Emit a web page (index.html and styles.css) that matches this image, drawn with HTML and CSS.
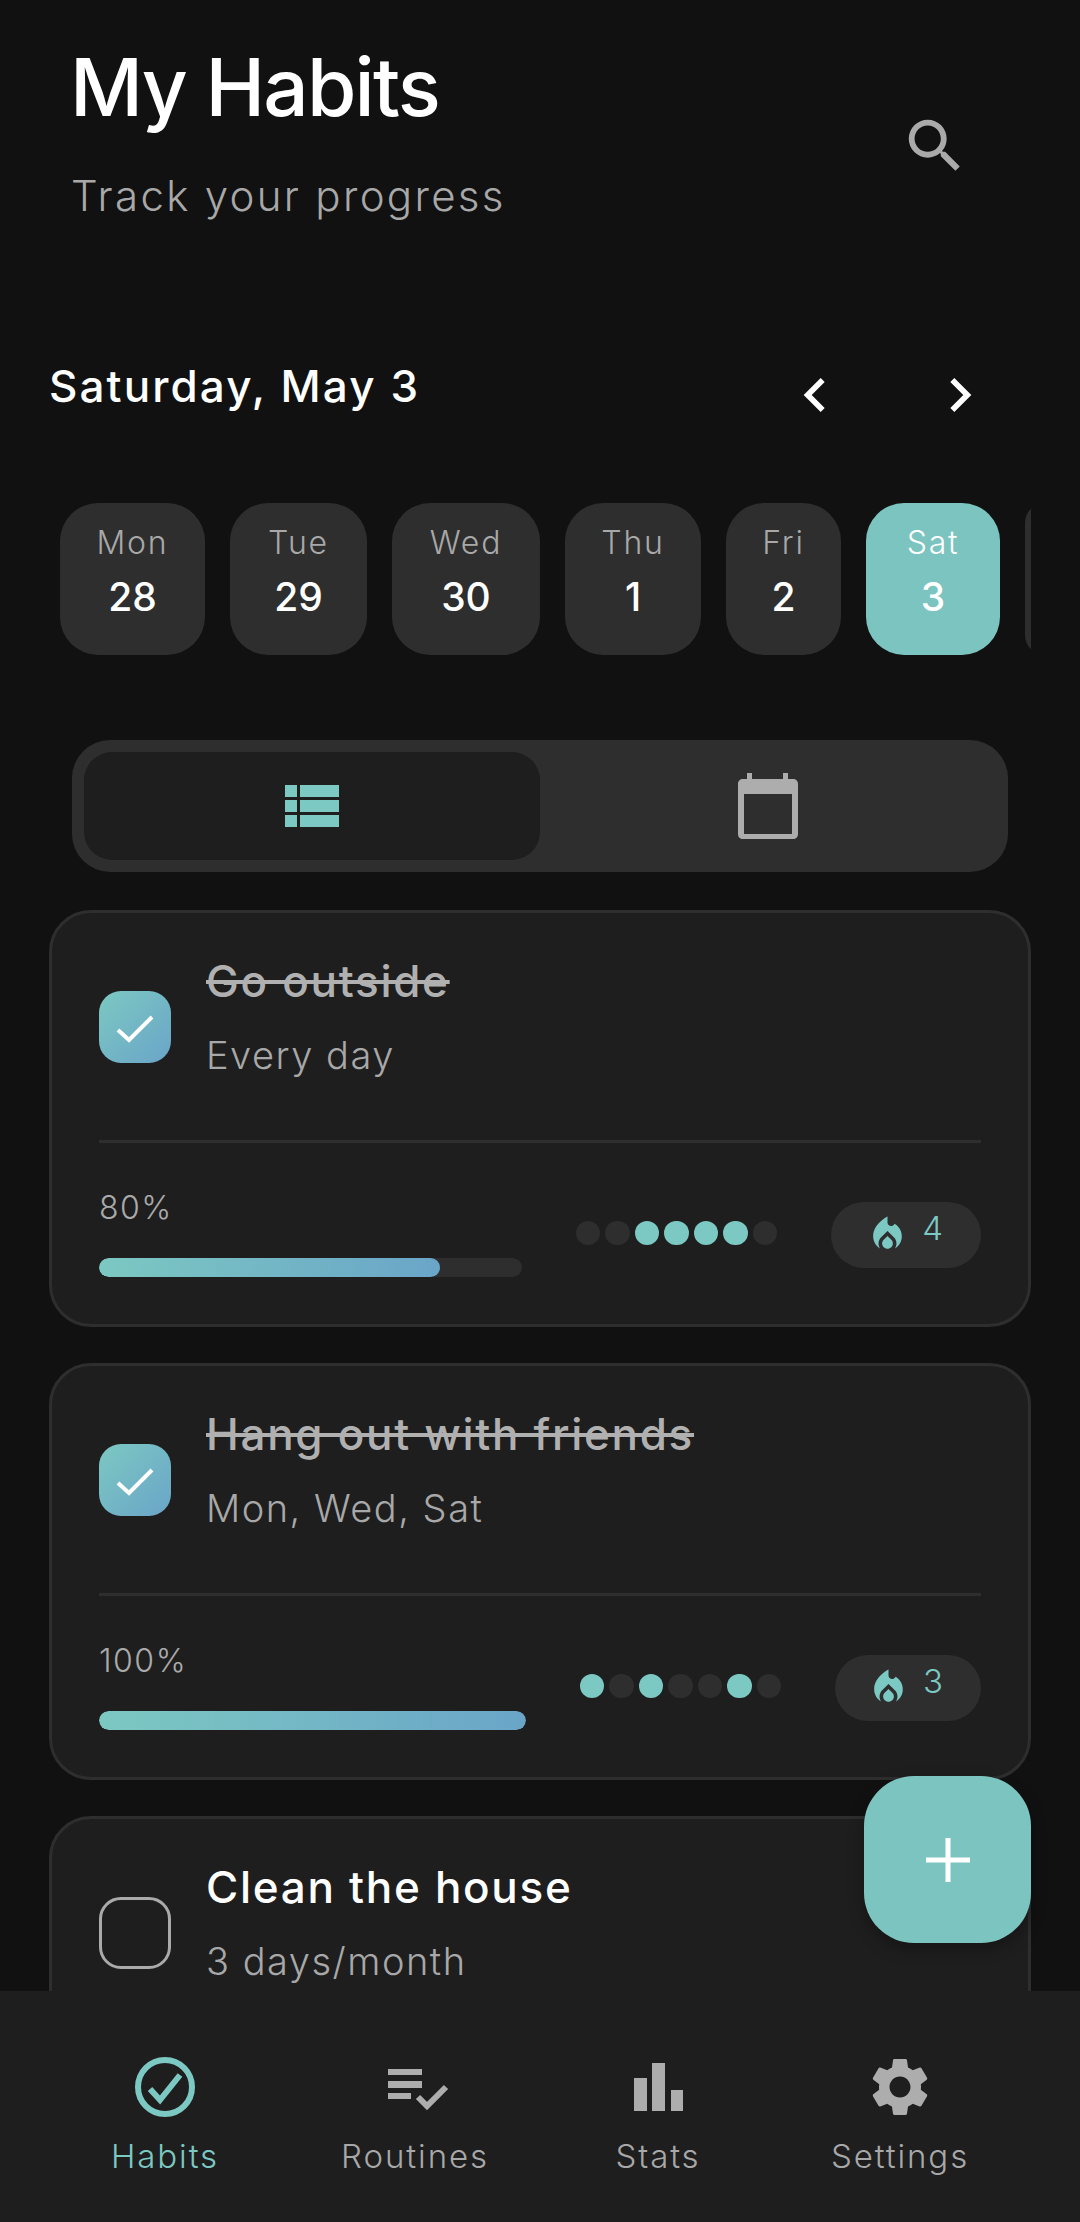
FILE: index.html
```html
<!DOCTYPE html>
<html>
<head>
    <link rel="stylesheet" href="styles.css">
</head>
<body>
    <div class="screen">
        <div class="content">
            <div class="header">
                <div>
                    <h1 class="title">My Habits</h1>
                    <p class="subtitle">Track your progress</p>
                </div>
                <svg class="search" viewBox="0 0 24 24"><path d="M15.5 14h-.79l-.28-.27A6.47 6.47 0 0 0 16 9.5 6.5 6.5 0 1 0 9.5 16c1.61 0 3.09-.59 4.23-1.57l.27.28v.79l5 4.99L20.49 19l-4.99-5zm-6 0C7.01 14 5 11.99 5 9.5S7.01 5 9.5 5 14 7.01 14 9.5 11.99 14 9.5 14z"/></svg>
            </div>

            <div class="date-row">
                <div class="date">Saturday, May 3</div>
                <div class="date-nav">
                    <svg viewBox="0 0 24 24"><path d="M15.41 7.41L14 6l-6 6 6 6 1.41-1.41L10.83 12z"/></svg>
                    <svg viewBox="0 0 24 24"><path d="M10 6L8.59 7.41 13.17 12l-4.58 4.59L10 18l6-6z"/></svg>
                </div>
            </div>

            <div class="days">
                <div class="day"><span class="day-name">Mon</span><span class="day-num">28</span></div>
                <div class="day"><span class="day-name">Tue</span><span class="day-num">29</span></div>
                <div class="day"><span class="day-name">Wed</span><span class="day-num">30</span></div>
                <div class="day"><span class="day-name">Thu</span><span class="day-num">1</span></div>
                <div class="day"><span class="day-name">Fri</span><span class="day-num">2</span></div>
                <div class="day active"><span class="day-name">Sat</span><span class="day-num">3</span></div>
                <div class="day"></div>
            </div>

            <div class="toggle">
                <div class="toggle-item selected">
                    <svg class="icon-list" viewBox="0 0 54 42">
                        <rect x="0" y="0" width="12" height="12"/><rect x="15" y="0" width="39" height="12"/>
                        <rect x="0" y="15" width="12" height="12"/><rect x="15" y="15" width="39" height="12"/>
                        <rect x="0" y="30" width="12" height="12"/><rect x="15" y="30" width="39" height="12"/>
                    </svg>
                </div>
                <div class="toggle-item">
                    <svg class="icon-cal" viewBox="0 0 60 66"><path fill-rule="evenodd" d="M9 0h5v6h31V0h5v6h5c3 0 5 2 5 5v50c0 3-2 5-5 5H5c-3 0-5-2-5-5V11c0-3 2-5 5-5h4zM6 21v40h48V21z"/></svg>
                </div>
            </div>

            <div class="card">
                <div class="card-top">
                    <div class="check done">
                        <svg viewBox="0 0 72 72"><path d="M19 39l11 10 23-23"/></svg>
                    </div>
                    <div>
                        <div class="habit-name struck">Go outside</div>
                        <div class="habit-freq">Every day</div>
                    </div>
                </div>
                <div class="card-bottom">
                    <div class="progress">
                        <div class="percent">80%</div>
                        <div class="bar"><div class="bar-fill" style="width: 80.6%"></div></div>
                    </div>
                    <div class="dots">
                        <i></i><i></i><i class="on"></i><i class="on"></i><i class="on"></i><i class="on"></i><i></i>
                    </div>
                    <div class="streak">
                        <svg viewBox="0 0 24 24"><path d="M12 12.9l-2.13 2.09C9.31 15.55 9 16.28 9 17.06 9 18.68 10.35 20 12 20s3-1.32 3-2.94c0-.78-.31-1.52-.87-2.07L12 12.9z"/><path d="M16 6l-.44.55C14.38 8.02 12 7.19 12 5.3V2S4 6 4 13c0 2.92 1.56 5.47 3.89 6.86-.56-.79-.89-1.76-.89-2.8 0-1.32.52-2.56 1.47-3.5L12 10.1l3.53 3.47c.95.93 1.47 2.17 1.47 3.5 0 1.02-.31 1.96-.85 2.75 1.89-1.15 3.29-3.06 3.71-5.3.66-3.55-1.07-6.9-3.86-8.52z"/></svg>
                        <span>4</span>
                    </div>
                </div>
            </div>

            <div class="card">
                <div class="card-top">
                    <div class="check done">
                        <svg viewBox="0 0 72 72"><path d="M19 39l11 10 23-23"/></svg>
                    </div>
                    <div>
                        <div class="habit-name struck">Hang out with friends</div>
                        <div class="habit-freq">Mon, Wed, Sat</div>
                    </div>
                </div>
                <div class="card-bottom">
                    <div class="progress">
                        <div class="percent">100%</div>
                        <div class="bar"><div class="bar-fill" style="width: 100%"></div></div>
                    </div>
                    <div class="dots">
                        <i class="on"></i><i></i><i class="on"></i><i></i><i></i><i class="on"></i><i></i>
                    </div>
                    <div class="streak short">
                        <svg viewBox="0 0 24 24"><path d="M12 12.9l-2.13 2.09C9.31 15.55 9 16.28 9 17.06 9 18.68 10.35 20 12 20s3-1.32 3-2.94c0-.78-.31-1.52-.87-2.07L12 12.9z"/><path d="M16 6l-.44.55C14.38 8.02 12 7.19 12 5.3V2S4 6 4 13c0 2.92 1.56 5.47 3.89 6.86-.56-.79-.89-1.76-.89-2.8 0-1.32.52-2.56 1.47-3.5L12 10.1l3.53 3.47c.95.93 1.47 2.17 1.47 3.5 0 1.02-.31 1.96-.85 2.75 1.89-1.15 3.29-3.06 3.71-5.3.66-3.55-1.07-6.9-3.86-8.52z"/></svg>
                        <span>3</span>
                    </div>
                </div>
            </div>

            <div class="card">
                <div class="card-top">
                    <div class="check"></div>
                    <div>
                        <div class="habit-name">Clean the house</div>
                        <div class="habit-freq">3 days/month</div>
                    </div>
                </div>
            </div>
        </div>

        <div class="fab">
            <svg viewBox="0 0 44 44"><path d="M22 0v44M0 22h44"/></svg>
        </div>

        <div class="nav">
            <div class="nav-item current">
                <svg class="stroke" viewBox="0 0 70 70"><circle cx="35" cy="35" r="27"/><path d="M20 37l10 11 20-25"/></svg>
                <span>Habits</span>
            </div>
            <div class="nav-item">
                <svg viewBox="0 0 70 70"><path d="M8 17h34v6H8zM8 29h34v7H8zM8 41h23v6H8z"/><path class="tick" d="M38 45l9 9 19-19"/></svg>
                <span>Routines</span>
            </div>
            <div class="nav-item">
                <svg viewBox="0 0 70 70"><path d="M11 26h13v33H11zM29 11h13v48H29zM48 38h12v21H48z"/></svg>
                <span>Stats</span>
            </div>
            <div class="nav-item">
                <svg viewBox="0 0 24 24"><path d="M19.14 12.94c.04-.3.06-.61.06-.94 0-.32-.02-.64-.07-.94l2.03-1.58a.49.49 0 0 0 .12-.61l-1.92-3.32a.488.488 0 0 0-.59-.22l-2.39.96c-.5-.38-1.03-.7-1.62-.94l-.36-2.54a.484.484 0 0 0-.48-.41h-3.84c-.24 0-.43.17-.47.41l-.36 2.54c-.59.24-1.13.57-1.62.94l-2.39-.96c-.22-.08-.47 0-.59.22L2.74 8.87c-.12.21-.08.47.12.61l2.03 1.58c-.05.3-.09.63-.09.94s.02.64.07.94l-2.03 1.58a.49.49 0 0 0-.12.61l1.92 3.32c.12.22.37.29.59.22l2.39-.96c.5.38 1.03.7 1.62.94l.36 2.54c.05.24.24.41.48.41h3.84c.24 0 .44-.17.47-.41l.36-2.54c.59-.24 1.13-.56 1.62-.94l2.39.96c.22.08.47 0 .59-.22l1.92-3.32c.12-.22.07-.47-.12-.61l-2.01-1.58zM12 15.6c-1.98 0-3.6-1.62-3.6-3.6s1.62-3.6 3.6-3.6 3.6 1.62 3.6 3.6-1.62 3.6-3.6 3.6z"/></svg>
                <span>Settings</span>
            </div>
        </div>
    </div>
</body>
</html>
```

FILE: styles.css
```css
* {
    box-sizing: border-box;
}
body {
    font-family: Inter, "Noto Sans", sans-serif;
    font-weight: 300;
    background-color: #111111;
    margin: 0;
    padding: 0;
}
.screen {
    position: relative;
    width: 1080px;
    height: 2222px;
    display: flex;
    flex-direction: column;
    overflow: hidden;
    background-color: #111111;
}
.content {
    flex: 1;
    min-height: 0;
    overflow: hidden;
}

/* header */
.header {
    display: flex;
    justify-content: space-between;
    padding: 39px 110px 0 70px;
}
.title {
    margin: 0;
    font-size: 80px;
    line-height: 96px;
    font-weight: 500;
    letter-spacing: -1.8px;
    color: #ffffff;
}
.subtitle {
    margin: 33px 0 0 1px;
    font-size: 42px;
    line-height: 56px;
    letter-spacing: 2.3px;
    color: #a8a8a8;
}
.search {
    width: 70px;
    height: 70px;
    margin-top: 72px;
    fill: #aaaaaa;
}

/* date */
.date-row {
    display: flex;
    justify-content: space-between;
    margin-top: 133px;
    padding: 0 86px 0 49px;
    height: 72px;
}
.date {
    padding-top: 1px;
    font-size: 44px;
    line-height: 56px;
    font-weight: 500;
    letter-spacing: 2.1px;
    color: #ffffff;
}
.date-nav {
    display: flex;
    gap: 77px;
}
.date-nav svg {
    width: 68px;
    height: 68px;
    margin-top: 4px;
    fill: #ffffff;
}

.days {
    display: grid;
    grid-template-columns: 145px 137px 148px 136px 115px 134px 40px;
    gap: 25px;
    width: 971px;
    margin: 74px 0 0 60px;
    overflow: hidden;
}
.day {
    height: 152px;
    padding-top: 20px;
    display: flex;
    flex-direction: column;
    align-items: center;
    background-color: #2e2e2e;
    border-radius: 38px;
}
.day-name {
    font-size: 32px;
    line-height: 40px;
    letter-spacing: 1.8px;
    color: #a8a8a8;
}
.day-num {
    margin-top: 10px;
    font-size: 39px;
    line-height: 48px;
    font-weight: 500;
    color: #ffffff;
}
.day.active {
    background-color: #7cc4bf;
}
.day.active .day-name {
    color: #ffffff;
}

/* list / calendar switch */
.toggle {
    display: flex;
    height: 132px;
    margin: 85px 72px 0;
    padding: 12px;
    background-color: #2e2e2e;
    border-radius: 38px;
}
.toggle-item {
    flex: 1;
    display: flex;
    align-items: center;
    justify-content: center;
    border-radius: 28px;
}
.toggle-item.selected {
    background-color: #1e1e1e;
}
.icon-list {
    width: 54px;
    height: 42px;
    fill: #7cc8c2;
}
.icon-cal {
    width: 60px;
    height: 66px;
    fill: #adadad;
}

/* habit cards */
.card {
    height: 417px;
    margin: 36px 49px 0;
    padding: 36px 47px 0;
    background-color: #1e1e1e;
    border: 3px solid #2e2e2e;
    border-radius: 42px;
}
.toggle + .card {
    margin-top: 38px;
}
.card-top {
    display: flex;
    gap: 35px;
    height: 194px;
    border-bottom: 3px solid #2e2e2e;
}
.check {
    flex: none;
    width: 72px;
    height: 72px;
    margin-top: 42px;
    border: 3px solid #aaaaaa;
    border-radius: 22px;
}
.check.done {
    border: none;
    background: linear-gradient(135deg, #7cc8c2, #6aa5c8);
}
.check svg {
    display: block;
    width: 72px;
    height: 72px;
    fill: none;
    stroke: #ffffff;
    stroke-width: 4;
}
.habit-name {
    padding-top: 2px;
    font-size: 44px;
    line-height: 60px;
    font-weight: 500;
    letter-spacing: 1.7px;
    color: #ffffff;
}
.habit-name.struck {
    color: #b0b0b0;
    text-decoration: line-through;
}
.habit-freq {
    margin-top: 19px;
    font-size: 38px;
    line-height: 50px;
    letter-spacing: 1.5px;
    color: #a8a8a8;
}
.card-bottom {
    display: flex;
    align-items: center;
    gap: 54px;
    padding-top: 43px;
}
.progress {
    flex: 1;
}
.percent {
    padding-top: 2px;
    font-size: 32px;
    line-height: 40px;
    letter-spacing: 1.5px;
    color: #aaaaaa;
}
.bar {
    height: 19px;
    margin-top: 30px;
    background-color: #2e2e2e;
    border-radius: 10px;
    overflow: hidden;
}
.bar-fill {
    height: 100%;
    background: linear-gradient(90deg, #7cc8c2, #6aa5c8);
    border-radius: 10px;
}
.dots {
    display: flex;
    gap: 5px;
    margin-top: 3px;
}
.dots i {
    display: block;
    width: 24.5px;
    height: 24.5px;
    background-color: #2e2e2e;
    border-radius: 50%;
}
.dots i.on {
    background-color: #7cc8c2;
}
.streak {
    display: flex;
    align-items: center;
    gap: 13px;
    height: 66px;
    margin-top: 6px;
    padding: 0 38px 0 35px;
    background-color: #2e2e2e;
    border-radius: 33px;
}
.streak.short {
    padding-left: 32px;
}
.streak svg {
    width: 43px;
    height: 43px;
    fill: #7cc8c2;
}
.streak span {
    margin-top: -13px;
    font-size: 33px;
    line-height: 40px;
    color: #7cc8c2;
}

/* floating add button */
.fab {
    position: absolute;
    left: 864px;
    top: 1776px;
    width: 167px;
    height: 167px;
    display: flex;
    align-items: center;
    justify-content: center;
    background-color: #7cc4bf;
    border-radius: 50px;
    box-shadow: 0 6px 16px rgba(0, 0, 0, 0.3);
}
.fab svg {
    width: 44px;
    height: 44px;
    fill: none;
    stroke: #ffffff;
    stroke-width: 5;
}

/* bottom navigation */
.nav {
    flex: none;
    height: 231px;
    display: grid;
    grid-template-columns: 250px 250px 236px 248px;
    padding: 61px 0 0 40px;
    background-color: #1e1e1e;
}
.nav-item {
    display: flex;
    flex-direction: column;
    align-items: center;
    font-size: 33px;
    line-height: 44px;
    letter-spacing: 1.9px;
    color: #a8a8a8;
}
.nav-item svg {
    width: 70px;
    height: 70px;
    margin-bottom: 12px;
    fill: #adadad;
}
.nav-item .tick {
    fill: none;
    stroke: #adadad;
    stroke-width: 6;
}
.nav-item.current {
    color: #7cc8c2;
}
.nav-item .stroke {
    fill: none;
    stroke: #7cc8c2;
    stroke-width: 6;
}
```
